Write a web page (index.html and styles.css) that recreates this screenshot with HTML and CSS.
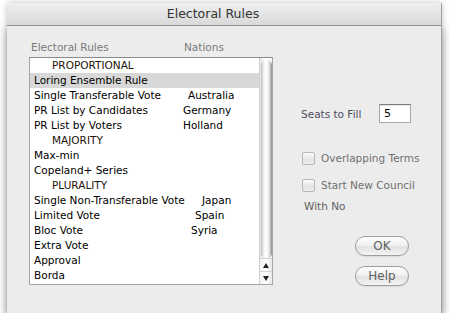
FILE: index.html
```html
<!DOCTYPE html>
<html>
<head>
  <title>Electoral Rules</title>
  <link rel="stylesheet" href="styles.css">
</head>
<body>
  <div class="window">
    <div class="titlebar">Electoral Rules</div>
    <div class="content">
      <div class="list-panel">
        <div class="list-head">
          <span>Electoral Rules</span>
          <span class="head-nations">Nations</span>
        </div>
        <div class="listbox">
          <div class="rows">
            <div class="row group"><span>PROPORTIONAL</span></div>
            <div class="row selected"><span>Loring Ensemble Rule</span></div>
            <div class="row"><span>Single Transferable Vote</span><span class="nation au">Australia</span></div>
            <div class="row"><span>PR List by Candidates</span><span class="nation de">Germany</span></div>
            <div class="row"><span>PR List by Voters</span><span class="nation nl">Holland</span></div>
            <div class="row group"><span>MAJORITY</span></div>
            <div class="row"><span>Max-min</span></div>
            <div class="row"><span>Copeland+ Series</span></div>
            <div class="row group"><span>PLURALITY</span></div>
            <div class="row"><span>Single Non-Transferable Vote</span><span class="nation jp">Japan</span></div>
            <div class="row"><span>Limited Vote</span><span class="nation es">Spain</span></div>
            <div class="row"><span>Bloc Vote</span><span class="nation sy">Syria</span></div>
            <div class="row"><span>Extra Vote</span></div>
            <div class="row"><span>Approval</span></div>
            <div class="row"><span>Borda</span></div>
          </div>
          <div class="scrollbar">
            <div class="thumb"></div>
            <div class="arrow up"></div>
            <div class="arrow down"></div>
          </div>
        </div>
      </div>

      <div class="side">
        <div class="seats">
          <label for="seats">Seats to Fill</label>
          <input id="seats" type="text" value="5">
        </div>
        <div class="check first">
          <span class="box"></span>
          <span>Overlapping Terms</span>
        </div>
        <div class="check">
          <span class="box"></span>
          <span>Start New Council</span>
        </div>
        <div class="with-no">With No</div>
        <div class="buttons">
          <button class="pill">OK</button>
          <button class="pill">Help</button>
        </div>
      </div>
    </div>
  </div>
</body>
</html>
```

FILE: styles.css
```css
body {
  margin: 0;
  background: #ffffff;
  font-family: "DejaVu Sans", sans-serif;
  font-size: 10.5px;
  overflow: hidden;
}

.window {
  margin: 3px 0 0 7px;
  width: 434px;
  height: 310px;
  background: #ececec;
  border-right: 1px solid #a0a0a0;
  box-shadow: 0 26px 10px rgba(0, 0, 0, 0.34), 0 0 6px rgba(0, 0, 0, 0.25);
}

.titlebar {
  height: 22px;
  line-height: 22px;
  text-align: center;
  padding-right: 22px;
  font-size: 12.5px;
  color: #333;
  background: linear-gradient(#efefef, #e6e6e6 40%, #d9d9d9);
  border-bottom: 1px solid #8e8e8e;
}

.content {
  display: flex;
  padding-left: 22px;
}

/* list on the left */
.list-panel {
  width: 244px;
  padding-top: 15px;
}

.list-head {
  display: grid;
  height: 13px;
  line-height: 13px;
  color: #7a7a7a;
  margin-bottom: 3px;
}

.list-head span {
  grid-area: 1 / 1;
  padding-left: 2px;
}

.list-head .head-nations {
  padding-left: 155px;
}

.listbox {
  display: flex;
  height: 226px;
  background: #ffffff;
  border: 1px solid #a5a5a5;
  border-top-color: #8c8c8c;
}

.rows {
  flex: 1;
}

.row {
  display: grid;
  height: 15px;
  line-height: 15px;
  padding-left: 4px;
  color: #000;
}

.row span {
  grid-area: 1 / 1;
}

.row.group {
  padding-left: 22px;
  color: #1c1208;
}

.row.selected {
  background: #d8d8d8;
}

.nation { margin-left: 154px; }
.nation.de,
.nation.nl { margin-left: 149px; }
.nation.jp { margin-left: 168px; }
.nation.es { margin-left: 161px; }
.nation.sy { margin-left: 157px; }

.scrollbar {
  width: 12px;
  display: flex;
  flex-direction: column;
  border-left: 1px solid #cfcfcf;
  background: linear-gradient(to right, #e6e6e6, #ffffff 40%, #f4f4f4);
}

.thumb {
  flex: 1;
  margin: 2px 0 0 1px;
  border-radius: 6px 6px 5px 5px;
  background: linear-gradient(to right, #b8b8b8, #f4f4f4 25%, #ffffff 50%, #e4e4e4 75%, #8a8a8a);
}

.arrow {
  height: 12px;
  display: flex;
  justify-content: center;
  align-items: center;
  background: linear-gradient(to right, #f2f2f2, #ffffff 50%, #e8e8e8);
}

.arrow.up {
  border-top: 1px solid #d0d0d0;
  border-bottom: 1px solid #d6d6d6;
}

.arrow::before {
  content: "";
  border-left: 3px solid transparent;
  border-right: 3px solid transparent;
}

.arrow.up::before {
  border-bottom: 5px solid #222;
}

.arrow.down::before {
  border-top: 5px solid #222;
}

/* controls on the right */
.side {
  margin-left: 28px;
  width: 130px;
  padding-top: 78px;
}

.seats {
  display: flex;
  align-items: center;
  height: 19px;
}

.seats label {
  color: #4e4e62;
  width: 78px;
}

.seats input {
  box-sizing: border-box;
  width: 32px;
  height: 19px;
  margin: 0;
  padding: 0 4px;
  font: inherit;
  font-size: 11px;
  color: #000;
  border: 1px solid #a8a8a8;
  border-top-color: #7e7e7e;
  box-shadow: inset 0 1px 1px rgba(0, 0, 0, 0.12);
  outline: none;
}

.check {
  display: flex;
  align-items: center;
  height: 16px;
  margin-top: 11px;
  color: #707070;
}

.check.first {
  margin-top: 27px;
}

.box {
  width: 11px;
  height: 11px;
  margin: 0 6px 0 1px;
  border: 1px solid #b8b8b8;
  border-radius: 2px;
  background: linear-gradient(#fbfbfb, #e4e4e4 60%, #ededed);
}

.with-no {
  height: 13px;
  line-height: 13px;
  margin-top: 7px;
  padding-left: 3px;
  color: #606060;
}

.buttons {
  display: flex;
  flex-direction: column;
  gap: 10px;
  margin: 23px 0 0 54px;
}

.pill {
  width: 54px;
  height: 20px;
  padding: 0;
  font-family: inherit;
  font-size: 12px;
  color: #5e5e5e;
  border: 1px solid #9e9e9e;
  border-radius: 10px;
  background: linear-gradient(#fdfdfd, #f0f0f0 45%, #e2e2e2 55%, #f4f4f4);
  box-shadow: 0 1px 1px rgba(0, 0, 0, 0.08);
}
```
